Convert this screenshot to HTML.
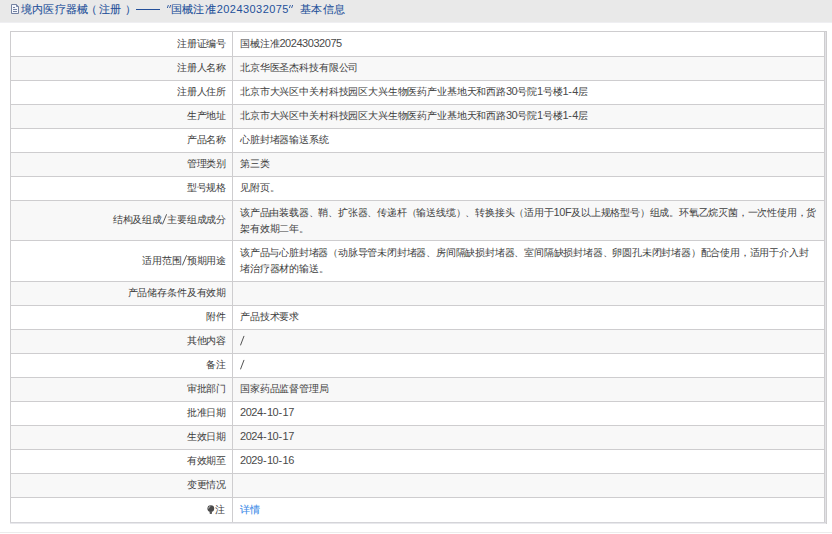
<!DOCTYPE html>
<html><head><meta charset="utf-8"><style>
*{margin:0;padding:0;box-sizing:border-box}
html,body{width:832px;height:534px;overflow:hidden;background:#fff}
body{position:relative;font-family:"Liberation Sans",sans-serif;color:#3d3d3d;font-size:10px}

#hd{position:absolute;left:0;top:0;width:832px;height:22px;background:#e9e9e9;box-shadow:0 1px 0 #efeff2}
#hd .t{position:absolute;top:0;height:22px;line-height:18px;font-size:11px;color:#24509a;-webkit-text-stroke:0.08px #24509a;white-space:nowrap}
#hd .q{font-size:14px;line-height:22px;-webkit-text-stroke:0}
.r{position:absolute;left:11px;width:813px}
.l{position:absolute;right:598px;line-height:16px;white-space:nowrap;color:#3d3d3d;letter-spacing:-0.15px;margin-right:-0.15px}
.v{position:absolute;left:229px;line-height:16px;white-space:nowrap;letter-spacing:-0.15px}
.n{font-size:11px;letter-spacing:-0.45px;line-height:10px;-webkit-text-stroke:0;color:#4a4a4a}
.h{margin:0 0.3px;letter-spacing:0}
.sl{margin:0 1.6px}
.hl{position:absolute;left:10px;width:815px;height:1px;background:#cecdcf}
.lnk{color:#3a8ae8;-webkit-text-stroke:0.12px #3a8ae8}
.bulb{display:inline-block;width:8px;height:10px;margin-right:-0.3px;vertical-align:-2px}
.bulb svg{display:block}
</style></head><body>
<div id="hd">
<svg style="position:absolute;left:10px;top:3px" width="11" height="12" viewBox="0 0 11 12">
<path d="M1.5 1.5 H6.5 L8.5 3.5 V10.5 H1.5 Z" fill="#f4f6fb" stroke="#7482a3" stroke-width="1"/>
<path d="M6.5 1.5 V3.5 H8.5" fill="#9fb0d0" stroke="#7482a3" stroke-width="1"/>
<path d="M3 4.5 H5 M3 6.5 H7 M3 8.5 H7" stroke="#7482a3" stroke-width="1"/>
</svg>
<div class="t" style="left:21.2px;letter-spacing:0.15px">境内医疗器械</div>
<div class="t" style="left:85.5px">（</div>
<div class="t" style="left:99px">注册</div>
<div class="t" style="left:125px">）</div>
<div style="position:absolute;left:136px;top:9px;width:24px;height:1px;background:#24509a"></div>
<svg style="position:absolute;left:166px;top:4px" width="6" height="5" viewBox="0 0 6 5"><path d="M1.3 4 L2.4 1 M3.6 4 L4.7 1" stroke="#24509a" stroke-width="0.9"/></svg>
<div class="t" style="left:170.8px;letter-spacing:0.3px">国械注准</div>
<div class="t" style="left:216.7px;letter-spacing:0.45px;-webkit-text-stroke:0">20243032075</div>
<svg style="position:absolute;left:288px;top:4px" width="6" height="5" viewBox="0 0 6 5"><path d="M1.3 4 L2.4 1 M3.6 4 L4.7 1" stroke="#24509a" stroke-width="0.9"/></svg>
<div class="t" style="left:300.3px;letter-spacing:0.2px">基本信息</div>
</div>
<div style="position:absolute;left:10px;top:31px;width:817px;height:1px;background:#cecdcf"></div>
<div style="position:absolute;left:10px;top:31px;width:1px;height:493px;background:#cecdcf"></div>
<div style="position:absolute;left:10px;top:522px;width:817px;height:1px;background:#d4d4d8"></div>
<div style="position:absolute;left:10px;top:523px;width:817px;height:1px;background:#e8e8ec"></div>
<div class="r" style="top:32px;height:24px;background:#ffffff"><div class="l" style="top:4px">注册证编号</div><div class="v" style="top:4px">国械注准<span class="n">20243032075</span></div></div>
<div class="r" style="top:57px;height:23px;background:#f8f8f8"><div class="l" style="top:3px">注册人名称</div><div class="v" style="top:3px">北京华医圣杰科技有限公司</div></div>
<div class="hl" style="top:56px"></div>
<div class="r" style="top:81px;height:23px;background:#ffffff"><div class="l" style="top:3px">注册人住所</div><div class="v" style="top:3px">北京市大兴区中关村科技园区大兴生物医药产业基地天和西路<span class="n">30</span>号院<span class="n">1</span>号楼<span class="n">1<span class="h">-</span>4</span>层</div></div>
<div class="hl" style="top:80px"></div>
<div class="r" style="top:105px;height:23px;background:#f8f8f8"><div class="l" style="top:3px">生产地址</div><div class="v" style="top:3px">北京市大兴区中关村科技园区大兴生物医药产业基地天和西路<span class="n">30</span>号院<span class="n">1</span>号楼<span class="n">1<span class="h">-</span>4</span>层</div></div>
<div class="hl" style="top:104px"></div>
<div class="r" style="top:129px;height:23px;background:#ffffff"><div class="l" style="top:3px">产品名称</div><div class="v" style="top:3px">心脏封堵器输送系统</div></div>
<div class="hl" style="top:128px"></div>
<div class="r" style="top:153px;height:23px;background:#f8f8f8"><div class="l" style="top:3px">管理类别</div><div class="v" style="top:3px">第三类</div></div>
<div class="hl" style="top:152px"></div>
<div class="r" style="top:177px;height:23px;background:#ffffff"><div class="l" style="top:3px">型号规格</div><div class="v" style="top:3px">见附页。</div></div>
<div class="hl" style="top:176px"></div>
<div class="r" style="top:201px;height:39px;background:#f8f8f8"><div class="l" style="top:11px">结构及组成<svg width="5" height="16" viewBox="0 0 5 16" style="display:inline-block;vertical-align:top"><path d="M0.6 12 L4.5 2.6" stroke="#4a4a4a" stroke-width="0.9" stroke-linecap="round"/></svg>主要组成成分</div><div class="v" style="top:4px"><span style="letter-spacing:-0.2px">该产品由装载器、鞘、扩张器、传递杆（输送线缆）、转换接头（适用于<span class="n">10F</span>及以上规格型号）组成。环氧乙烷灭菌，一次性使用，货</span><br>架有效期二年。</div></div>
<div class="hl" style="top:200px"></div>
<div class="r" style="top:241px;height:40px;background:#ffffff"><div class="l" style="top:12px">适用范围<svg width="5" height="16" viewBox="0 0 5 16" style="display:inline-block;vertical-align:top"><path d="M0.6 12 L4.5 2.6" stroke="#4a4a4a" stroke-width="0.9" stroke-linecap="round"/></svg>预期用途</div><div class="v" style="top:4px"><span style="letter-spacing:-0.2px">该产品与心脏封堵器（动脉导管未闭封堵器、房间隔缺损封堵器、室间隔缺损封堵器、卵圆孔未闭封堵器）配合使用，适用于介入封</span><br>堵治疗器材的输送。</div></div>
<div class="hl" style="top:240px"></div>
<div class="r" style="top:282px;height:23px;background:#f8f8f8"><div class="l" style="top:3px">产品储存条件及有效期</div><div class="v" style="top:3px"></div></div>
<div class="hl" style="top:281px"></div>
<div class="r" style="top:306px;height:23px;background:#ffffff"><div class="l" style="top:3px">附件</div><div class="v" style="top:3px">产品技术要求</div></div>
<div class="hl" style="top:305px"></div>
<div class="r" style="top:330px;height:23px;background:#f8f8f8"><div class="l" style="top:3px">其他内容</div><div class="v" style="top:3px"><svg width="6" height="16" viewBox="0 0 6 16" style="display:inline-block;vertical-align:top"><path d="M0.6 12 L3.9 3.3" stroke="#4a4a4a" stroke-width="0.95" stroke-linecap="round"/></svg></div></div>
<div class="hl" style="top:329px"></div>
<div class="r" style="top:354px;height:23px;background:#ffffff"><div class="l" style="top:3px">备注</div><div class="v" style="top:3px"><svg width="6" height="16" viewBox="0 0 6 16" style="display:inline-block;vertical-align:top"><path d="M0.6 12 L3.9 3.3" stroke="#4a4a4a" stroke-width="0.95" stroke-linecap="round"/></svg></div></div>
<div class="hl" style="top:353px"></div>
<div class="r" style="top:378px;height:23px;background:#f8f8f8"><div class="l" style="top:3px">审批部门</div><div class="v" style="top:3px">国家药品监督管理局</div></div>
<div class="hl" style="top:377px"></div>
<div class="r" style="top:402px;height:23px;background:#ffffff"><div class="l" style="top:3px">批准日期</div><div class="v" style="top:3px"><span class="n">2024<span class="h">-</span>10<span class="h">-</span>17</span></div></div>
<div class="hl" style="top:401px"></div>
<div class="r" style="top:426px;height:23px;background:#f8f8f8"><div class="l" style="top:3px">生效日期</div><div class="v" style="top:3px"><span class="n">2024<span class="h">-</span>10<span class="h">-</span>17</span></div></div>
<div class="hl" style="top:425px"></div>
<div class="r" style="top:450px;height:23px;background:#ffffff"><div class="l" style="top:3px">有效期至</div><div class="v" style="top:3px"><span class="n">2029<span class="h">-</span>10<span class="h">-</span>16</span></div></div>
<div class="hl" style="top:449px"></div>
<div class="r" style="top:474px;height:23px;background:#f8f8f8"><div class="l" style="top:3px">变更情况</div><div class="v" style="top:3px"></div></div>
<div class="hl" style="top:473px"></div>
<div class="r" style="top:498px;height:24px;background:#ffffff"><div class="l" style="top:4px"><span class="bulb"><svg width="8" height="10" viewBox="0 0 8 10"><circle cx="3.8" cy="3.6" r="3.4" fill="#4a4a4a"/><path d="M2.6 6.5 H5 V8.6 Q3.8 9.6 2.6 8.6 Z" fill="#5a5a5a"/><path d="M1.6 3.6 Q1.6 1.6 3.4 1.3" stroke="#cfcfcf" stroke-width="0.8" fill="none"/></svg></span><span style="margin-right:1.2px">注</span></div><div class="v" style="top:4px"><span class="lnk">详情</span></div></div>
<div class="hl" style="top:497px"></div>
<div style="position:absolute;left:232px;top:31px;width:1px;height:491px;background:#cecdcf"></div>
<div style="position:absolute;left:824px;top:31px;width:1px;height:491px;background:#cecdcf"></div>
<div style="position:absolute;left:825px;top:32px;width:1px;height:490px;background:#e2e2e6"></div><div style="position:absolute;left:824px;top:31px;width:3px;height:1px;background:#cecdcf"></div>
<div style="position:absolute;left:826px;top:31px;width:1px;height:493px;background:#cecdcf"></div>
<div style="position:absolute;left:0;top:532px;width:832px;height:1px;background:#ececec"></div>
</body></html>
